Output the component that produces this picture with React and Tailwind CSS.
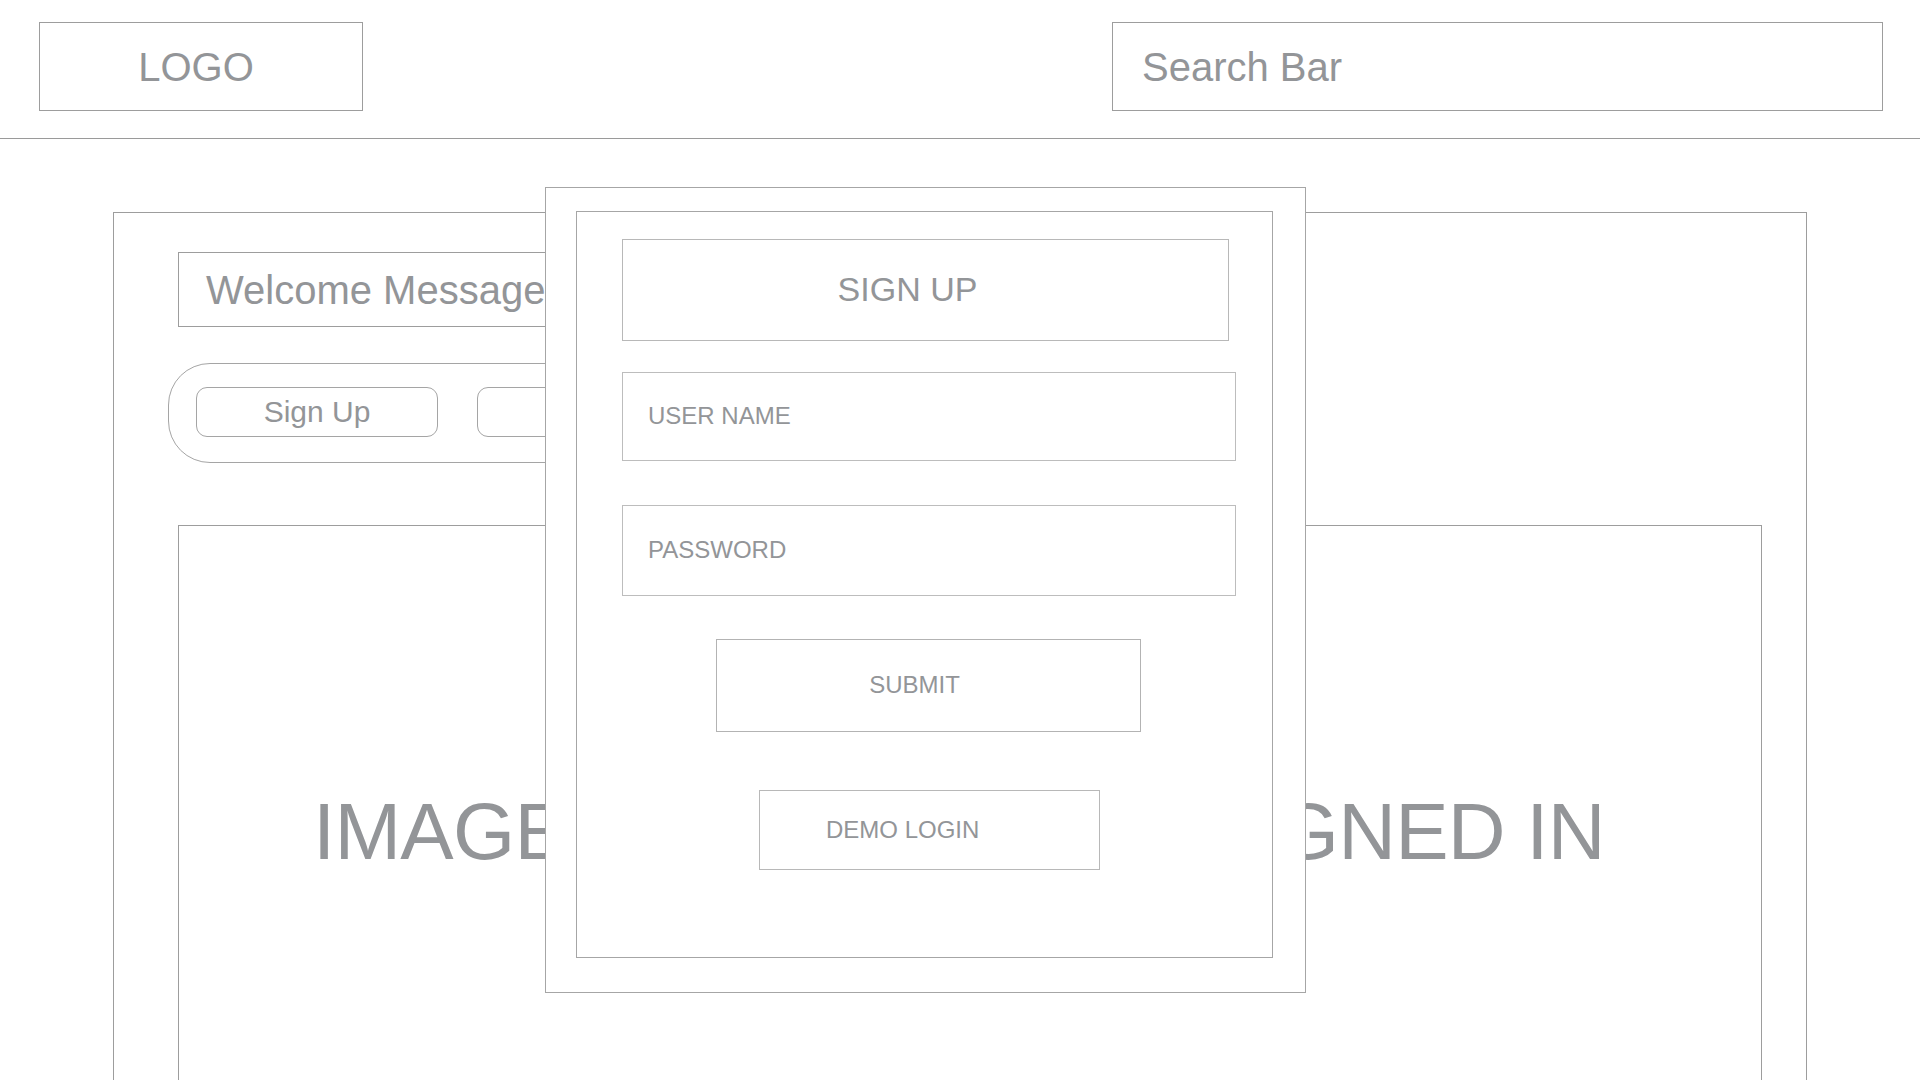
export default function App() {
  return (
    <div className="relative h-[1080px] w-[1920px] overflow-hidden bg-white font-['Liberation_Sans',Arial,sans-serif] text-[#939598]">
      {/* Header */}
      <header className="flex h-[139px] items-start justify-between border-b border-[#9a9a9a] pl-[39px] pr-[37px] pt-[22px]">
        <div className="flex h-[89px] w-[324px] items-center justify-center border border-[#9d9d9d] pr-[10px] text-[40px] leading-none">
          LOGO
        </div>
        <div className="flex h-[89px] w-[771px] items-center border border-[#9d9d9d] pl-[29px] text-[40px] leading-none">
          Search Bar
        </div>
      </header>

      {/* Main panel */}
      <main className="ml-[113px] mt-[73px] h-[950px] w-[1694px] border border-[#9d9d9d] pl-[64px] pr-[44px] pt-[39px]">
        <div className="flex h-[75px] w-[640px] items-center border border-[#9d9d9d] pl-[27px] text-[40px] leading-none whitespace-nowrap">
          Welcome Message
        </div>
        <div className="-ml-[10px] mt-[36px] flex h-[100px] w-[760px] items-start gap-[39px] rounded-[42px] border border-[#a5a5a5] pl-[27px] pt-[23px]">
          <div className="flex h-[50px] w-[242px] items-center justify-center rounded-[11px] border border-[#a5a5a5] text-[30px] leading-none">
            Sign Up
          </div>
          <div className="flex h-[50px] w-[242px] items-center justify-center rounded-[11px] border border-[#a5a5a5] text-[30px] leading-none">
            Log In
          </div>
        </div>
        <div className="mt-[62px] h-[700px] w-full border border-[#9d9d9d] pl-[134px] pt-[266px]">
          <div className="whitespace-nowrap text-[80px] leading-[80px] tracking-[-0.75px]">
            IMAGE IF USER IS NOT SIGNED IN
          </div>
        </div>
      </main>

      {/* Sign up modal */}
      <div className="absolute left-[545px] top-[187px] h-[806px] w-[761px] border border-[#a6a6a6] bg-white pl-[30px] pt-[23px]">
        <div className="flex h-[747px] w-[697px] flex-col items-start border border-[#a6a6a6] pl-[45px] pt-[27px]">
          <div className="flex h-[102px] w-[607px] items-center justify-center border border-[#b8b8b8] pb-[3px] pr-[36px] text-[34px] leading-none">
            SIGN UP
          </div>
          <div className="mt-[31px] flex h-[89px] w-[614px] items-center border border-[#bdbdbd] pb-[2px] pl-[25px] text-[24px] leading-none">
            USER NAME
          </div>
          <div className="mt-[44px] flex h-[91px] w-[614px] items-center border border-[#bdbdbd] pb-[2px] pl-[25px] text-[24px] leading-none">
            PASSWORD
          </div>
          <div className="ml-[94px] mt-[43px] flex h-[93px] w-[425px] items-center justify-center border border-[#b3b3b3] pb-[2px] pr-[28px] text-[24px] leading-none">
            SUBMIT
          </div>
          <div className="ml-[137px] mt-[58px] flex h-[80px] w-[341px] items-center border border-[#b8b8b8] pb-[1px] pl-[66px] text-[24px] leading-none">
            DEMO LOGIN
          </div>
        </div>
      </div>
    </div>
  );
}
